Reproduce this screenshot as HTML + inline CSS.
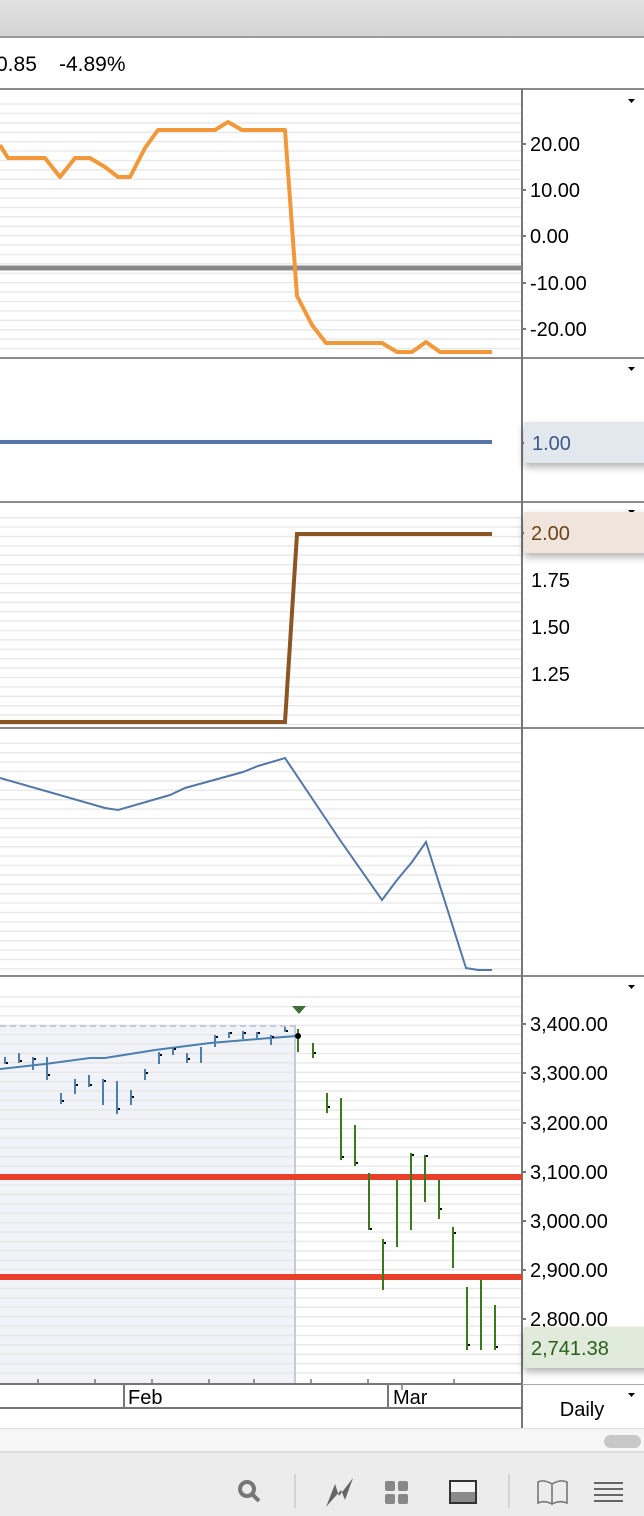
<!DOCTYPE html>
<html><head><meta charset="utf-8"><style>
body{margin:0;width:644px;height:1516px;overflow:hidden;background:#fff;font-family:"Liberation Sans",Arial,sans-serif}
svg{display:block}
</style></head><body>
<svg width="644" height="1516" viewBox="0 0 644 1516" xmlns="http://www.w3.org/2000/svg" font-family="Liberation Sans, Arial, sans-serif">
<defs>
<linearGradient id="tg" x1="0" y1="0" x2="0" y2="1"><stop offset="0" stop-color="#e2e2e2"/><stop offset="1" stop-color="#d3d3d3"/></linearGradient>
<pattern id="grid" width="10" height="9.4" patternUnits="userSpaceOnUse"><rect width="10" height="1.3" fill="#e6e6e6"/></pattern>
<filter id="sh" x="-20%" y="-50%" width="140%" height="200%"><feDropShadow dx="0" dy="4" stdDeviation="4" flood-color="#000" flood-opacity="0.3"/></filter>
</defs>
<rect width="644" height="37" fill="url(#tg)"/>
<rect y="36" width="644" height="2" fill="#9a9a9a"/>
<text x="-4" y="71" font-size="21" fill="#000">0.85</text>
<text x="59" y="71" font-size="21" fill="#000">-4.89%</text>
<rect y="88" width="644" height="2" fill="#8a8a8a"/>

<rect x="0" y="100" width="522" height="256" fill="url(#grid)"/>
<rect x="0" y="512" width="522" height="214" fill="url(#grid)"/>
<rect x="0" y="740" width="522" height="234" fill="url(#grid)"/>
<rect x="0" y="1025" width="295" height="359" fill="#f2f3f8"/>
<rect x="0" y="990" width="522" height="392" fill="url(#grid)"/>
<line x1="0" y1="1026" x2="295" y2="1026" stroke="#c5cbdb" stroke-width="2" stroke-dasharray="6,4"/>
<line x1="295" y1="1025" x2="295" y2="1384" stroke="#c5cbdb" stroke-width="2"/>

<rect y="357" width="644" height="2" fill="#8a8a8a"/>
<rect y="501" width="644" height="2" fill="#8a8a8a"/>
<rect y="727" width="644" height="2" fill="#8a8a8a"/>
<rect y="975" width="644" height="2" fill="#8a8a8a"/>
<rect x="521" y="89" width="2" height="1340" fill="#777"/>
<g fill="#000"><path d="M628 99h7l-3.5 4z"/><path d="M628 367h7l-3.5 4z"/><path d="M628 510h7l-3.5 4z"/><path d="M628 985h7l-3.5 4z"/><path d="M628 1393h7l-3.5 4z"/></g>
<g fill="#777"><rect x="523" y="143" width="3" height="2"/><rect x="523" y="189" width="3" height="2"/><rect x="523" y="235" width="3" height="2"/><rect x="523" y="282" width="3" height="2"/><rect x="523" y="328" width="3" height="2"/><rect x="523" y="442" width="3" height="2"/><rect x="523" y="532" width="3" height="2"/><rect x="523" y="1023" width="3" height="2"/><rect x="523" y="1072" width="3" height="2"/><rect x="523" y="1122" width="3" height="2"/><rect x="523" y="1171" width="3" height="2"/><rect x="523" y="1220" width="3" height="2"/><rect x="523" y="1269" width="3" height="2"/><rect x="523" y="1318" width="3" height="2"/></g>

<line x1="0" y1="268" x2="522" y2="268" stroke="#888" stroke-width="5"/>
<polyline fill="none" stroke="#f0983a" stroke-width="4" stroke-linejoin="round" points="0,145 8,158 45,158 60,177 75,158 90,158 105,167 118,177 130,177 145,148 158,130 215,130 228,122 242,130 285,130 297,296 312,325 326,343 382,343 397,352 412,352 426,342 440,352 492,352"/>
<g font-size="20" fill="#000"><text x="530" y="151">20.00</text><text x="530" y="197">10.00</text><text x="530" y="243">0.00</text><text x="530" y="290">-10.00</text><text x="530" y="336">-20.00</text></g>

<line x1="0" y1="442" x2="492" y2="442" stroke="#5577a8" stroke-width="4"/>
<rect x="524" y="422" width="130" height="41" fill="#e3e8ef" filter="url(#sh)"/>
<text x="532" y="450" font-size="20" fill="#3b5a85">1.00</text>

<polyline fill="none" stroke="#8b5623" stroke-width="4" points="0,722 285,722 297,534 492,534"/>
<rect x="524" y="512" width="130" height="41" fill="#efe5dc" filter="url(#sh)"/>
<text x="531" y="540" font-size="20" fill="#6e4218">2.00</text>
<g font-size="20" fill="#000"><text x="531" y="587">1.75</text><text x="531" y="634">1.50</text><text x="531" y="681">1.25</text></g>

<polyline fill="none" stroke="#5577a8" stroke-width="2" points="0,778 105,808 118,810 170,795 185,788 243,772 258,766 285,758 340,840 382,900 397,880 412,862 426,842 466,968 478,970 492,970"/>

<line x1="0" y1="1177" x2="522" y2="1177" stroke="#e8402a" stroke-width="6"/>
<line x1="0" y1="1277" x2="522" y2="1277" stroke="#e8402a" stroke-width="6"/>
<polyline fill="none" stroke="#4a7fb0" stroke-width="2" points="0,1069 45,1064 90,1058 105,1058 155,1050 210,1043 270,1038 297,1036"/>
<g stroke="#4a7fb0" stroke-width="2">
<line x1="5" y1="1057" x2="5" y2="1064"/><line x1="19" y1="1053" x2="19" y2="1063"/><line x1="33" y1="1057" x2="33" y2="1070"/><line x1="47" y1="1057" x2="47" y2="1080"/><line x1="61" y1="1093" x2="61" y2="1104"/><line x1="75" y1="1079" x2="75" y2="1094"/><line x1="89" y1="1075" x2="89" y2="1087"/><line x1="103" y1="1079" x2="103" y2="1105"/><line x1="117" y1="1081" x2="117" y2="1114"/><line x1="131" y1="1090" x2="131" y2="1105"/><line x1="145" y1="1069" x2="145" y2="1080"/><line x1="159" y1="1052" x2="159" y2="1064"/><line x1="173" y1="1048" x2="173" y2="1055"/><line x1="187" y1="1053" x2="187" y2="1063"/><line x1="201" y1="1047" x2="201" y2="1063"/><line x1="215" y1="1035" x2="215" y2="1047"/><line x1="229" y1="1032" x2="229" y2="1038"/><line x1="243" y1="1031" x2="243" y2="1039"/><line x1="257" y1="1032" x2="257" y2="1038"/><line x1="271" y1="1035" x2="271" y2="1045"/><line x1="285" y1="1027" x2="285" y2="1032"/>
</g>
<g fill="#000"><rect x="6" y="1062" width="2" height="2"/><rect x="20" y="1060" width="2" height="2"/><rect x="34" y="1058" width="2" height="2"/><rect x="48" y="1074" width="2" height="2"/><rect x="62" y="1100" width="2" height="2"/><rect x="76" y="1084" width="2" height="2"/><rect x="90" y="1084" width="2" height="2"/><rect x="104" y="1080" width="2" height="2"/><rect x="118" y="1108" width="2" height="2"/><rect x="132" y="1096" width="2" height="2"/><rect x="146" y="1072" width="2" height="2"/><rect x="160" y="1054" width="2" height="2"/><rect x="174" y="1048" width="2" height="2"/><rect x="188" y="1058" width="2" height="2"/><rect x="216" y="1036" width="2" height="2"/><rect x="230" y="1032" width="2" height="2"/><rect x="244" y="1032" width="2" height="2"/><rect x="258" y="1032" width="2" height="2"/><rect x="272" y="1036" width="2" height="2"/><rect x="286" y="1030" width="2" height="2"/><rect x="314" y="1052" width="2" height="2"/><rect x="328" y="1106" width="2" height="2"/><rect x="342" y="1156" width="2" height="2"/><rect x="356" y="1162" width="2" height="2"/><rect x="370" y="1228" width="2" height="2"/><rect x="384" y="1242" width="2" height="2"/><rect x="412" y="1154" width="2" height="2"/><rect x="426" y="1155" width="2" height="2"/><rect x="440" y="1208" width="2" height="2"/><rect x="454" y="1232" width="2" height="2"/><rect x="468" y="1344" width="2" height="2"/><rect x="496" y="1346" width="2" height="2"/></g>
<g stroke="#3a7a1e" stroke-width="2">
<line x1="298" y1="1029" x2="298" y2="1052"/><line x1="313" y1="1043" x2="313" y2="1058"/><line x1="327" y1="1093" x2="327" y2="1113"/><line x1="341" y1="1098" x2="341" y2="1160"/><line x1="355" y1="1125" x2="355" y2="1166"/><line x1="369" y1="1173" x2="369" y2="1230"/><line x1="383" y1="1239" x2="383" y2="1290"/><line x1="397" y1="1180" x2="397" y2="1247"/><line x1="411" y1="1153" x2="411" y2="1230"/><line x1="425" y1="1155" x2="425" y2="1202"/><line x1="439" y1="1180" x2="439" y2="1219"/><line x1="453" y1="1227" x2="453" y2="1268"/><line x1="467" y1="1287" x2="467" y2="1350"/><line x1="481" y1="1280" x2="481" y2="1350"/><line x1="495" y1="1305" x2="495" y2="1350"/>
</g>
<circle cx="298" cy="1036" r="3" fill="#000"/>
<path d="M292 1006h14l-7 8z" fill="#3f6e3a"/>
<g font-size="20" fill="#000"><text x="530" y="1031">3,400.00</text><text x="530" y="1080">3,300.00</text><text x="530" y="1130">3,200.00</text><text x="530" y="1179">3,100.00</text><text x="530" y="1228">3,000.00</text><text x="530" y="1277">2,900.00</text><text x="530" y="1326">2,800.00</text></g>
<rect x="524" y="1327" width="130" height="41" fill="#e0ebdc" filter="url(#sh)"/>
<text x="531" y="1355" font-size="20" fill="#2a5e1a">2,741.38</text>

<rect y="1383" width="522" height="2" fill="#777"/>
<g stroke="#777" stroke-width="1.5"><line x1="38" y1="1379" x2="38" y2="1384"/><line x1="95" y1="1379" x2="95" y2="1384"/><line x1="152" y1="1379" x2="152" y2="1384"/><line x1="209" y1="1379" x2="209" y2="1384"/><line x1="254" y1="1379" x2="254" y2="1384"/><line x1="311" y1="1379" x2="311" y2="1384"/><line x1="368" y1="1379" x2="368" y2="1384"/><line x1="454" y1="1379" x2="454" y2="1384"/><line x1="402" y1="1385" x2="402" y2="1390"/></g>
<rect x="123" y="1384" width="2" height="24" fill="#777"/>
<rect x="387" y="1384" width="2" height="24" fill="#777"/>
<text x="128" y="1404" font-size="20" fill="#000">Feb</text>
<text x="393" y="1404" font-size="20" fill="#000">Mar</text>
<rect y="1407" width="522" height="2" fill="#777"/>
<rect x="522" y="1384" width="122" height="1" fill="#aaa"/>
<text x="582" y="1416" font-size="20" fill="#000" text-anchor="middle">Daily</text>

<rect y="1429" width="644" height="22" fill="#f6f6f6"/>
<rect y="1428" width="644" height="1" fill="#e0e0e0"/>
<rect x="604" y="1435" width="37" height="13" rx="6.5" fill="#c8c8c8"/>
<rect y="1451" width="644" height="2" fill="#dcdcdc"/>
<rect y="1453" width="644" height="63" fill="#ececec"/>

<circle cx="247" cy="1489" r="7" fill="none" stroke="#777" stroke-width="4"/>
<line x1="252" y1="1494" x2="259" y2="1501" stroke="#777" stroke-width="4"/>
<rect x="294" y="1474" width="2" height="34" fill="#d4d4d4"/>
<path d="M326 1507 L335 1484 L339 1496 L353 1478 L345 1500 L341 1490 Z" fill="#666"/>
<g fill="#888"><rect x="385" y="1481" width="10" height="10" rx="2"/><rect x="398" y="1481" width="10" height="10" rx="2"/><rect x="385" y="1494" width="10" height="10" rx="2"/><rect x="398" y="1494" width="10" height="10" rx="2"/></g>
<rect x="450" y="1481" width="26" height="22" fill="#f4f4f4" stroke="#333" stroke-width="2"/>
<rect x="451" y="1492" width="24" height="10" fill="#8a8a8a"/>
<rect x="508" y="1474" width="2" height="34" fill="#d4d4d4"/>
<path d="M538 1482 Q544 1479 552 1484 Q560 1479 567 1482 V1503 Q560 1500 552 1504 Q544 1500 538 1503 Z M552 1484 V1504" fill="none" stroke="#777" stroke-width="1.6"/>
<g fill="#666"><rect x="594" y="1482" width="29" height="2"/><rect x="594" y="1488" width="29" height="2"/><rect x="594" y="1494" width="29" height="2"/><rect x="594" y="1500" width="29" height="2"/></g>
</svg>
</body></html>
